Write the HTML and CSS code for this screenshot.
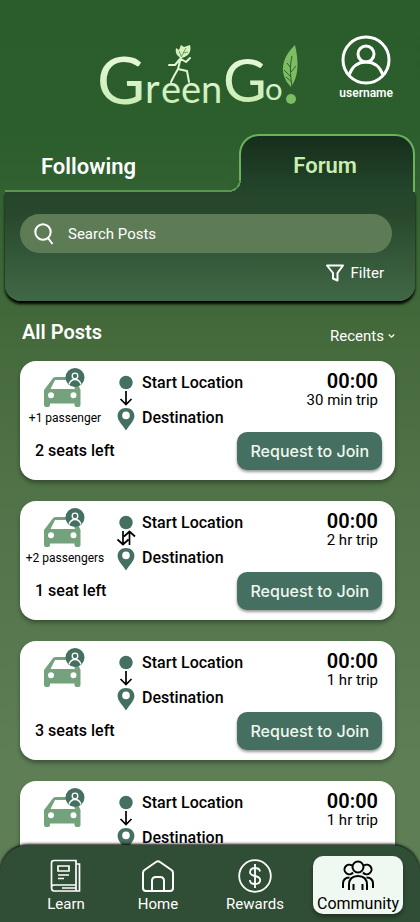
FILE: index.html
```html
<!DOCTYPE html>
<html lang="en">
<head>
<meta charset="utf-8">
<meta name="viewport" content="width=device-width, initial-scale=1">
<title>GreenGo! Community</title>
<link rel="stylesheet" href="styles.css">
</head>
<body>
<svg class="defs" width="0" height="0" aria-hidden="true">
  <defs>
    <symbol id="car" viewBox="0 0 44 42">
      <path fill="#74a27c" fill-rule="evenodd" d="M9 11.5Q9.800 9 12.500 9H29Q32 9 33 11.500L37.500 22V37Q37.500 39 35.500 39H33.500Q31.500 39 31.500 37V35.500H7V37Q7 39 5 39H3Q1 39 1 37V22ZM12 12L7.500 21H32L29 12ZM8 24.300a3 3 0 1 0 0 6a3 3 0 1 0 0-6ZM30.500 24.300a3 3 0 1 0 0 6a3 3 0 1 0 0-6Z"/>
      <circle cx="32" cy="9.500" r="9.500" fill="#446f61"/>
      <g fill="none" stroke="#fff" stroke-width="1.300"><circle cx="32" cy="8" r="2.800"/><path d="M26 16.500Q27.500 11.500 32 11.500T38 16.500"/></g>
    </symbol>
    <symbol id="oneway" viewBox="0 0 20 56">
      <circle cx="10" cy="7.500" r="6.700" fill="#446f61"/>
      <path fill="none" stroke="#000" stroke-width="1.700" d="M10 16V29M4.500 24L10 29.500L15.500 24"/>
      <path fill="#446f61" fill-rule="evenodd" d="M10 33C5 33 1.600 36.500 1.600 41C1.600 46 6.500 50 10 55.500C13.500 50 18.400 46 18.400 41C18.400 36.500 15 33 10 33ZM10 36.600a3.800 3.800 0 1 0 0 7.600a3.800 3.800 0 1 0 0-7.600Z"/>
    </symbol>
    <symbol id="roundtrip" viewBox="0 0 20 56">
      <circle cx="10" cy="7.500" r="6.700" fill="#446f61"/>
      <path fill="none" stroke="#000" stroke-width="1.700" d="M7 16V29.500M1.500 24.500L7 29.500L12.500 24.500M13.500 30V16.500M8 21.500L13.500 16.500L19 21.500"/>
      <path fill="#446f61" fill-rule="evenodd" d="M10 33C5 33 1.600 36.500 1.600 41C1.600 46 6.500 50 10 55.500C13.500 50 18.400 46 18.400 41C18.400 36.500 15 33 10 33ZM10 36.600a3.800 3.800 0 1 0 0 7.600a3.800 3.800 0 1 0 0-7.600Z"/>
    </symbol>
  </defs>
</svg>
<div class="app">
  <header class="header">
    <svg class="logo" viewBox="0 0 204 84" role="img" aria-label="GreenGo!">
      <defs><linearGradient id="mint" x1="0" y1="0" x2="0" y2="1"><stop offset="0" stop-color="#eefbe6"/><stop offset="1" stop-color="#c3eaa9"/></linearGradient></defs>
      <g class="logo-text" fill="url(#mint)">
        <text x="0" y="64" font-size="66">G</text>
        <text x="48" y="63" font-size="40">r</text>
        <text x="64" y="63" font-size="38">e</text>
        <text x="84" y="63" font-size="38">e</text>
        <text x="104" y="63" font-size="38">n</text>
        <text x="126" y="62" font-size="60">G</text>
        <text x="168" y="60" font-size="31">o</text>
      </g>
      <g fill="none" stroke="#e2f5d2" stroke-width="2" stroke-linecap="round" stroke-linejoin="round">
        <path d="M84 17L81 29L77 36L74 42M81 29L90 31L92 42M83 19L78 25L72 25M84 19L89 22L93 18"/>
      </g>
      <path fill="#d5f2bd" d="M84 18C80 16 78 13 79 8L82 10L84 5L87 7L93 5C95 12 91 17 84 18Z"/>
      <path fill="none" stroke="#50864a" stroke-width=".8" d="M84 17L89 8M84 16L82 11M86 13L91 12"/>
      <path fill="#7cbd62" d="M198 5C186 16 180 33 194 47C200 38 203 27 198 5Z"/>
      <path fill="none" stroke="#2d602e" stroke-width="1" d="M195 48C194 37 192 29 195 16M194 37L187 30M194 32L199 26M193 27L190 23M195 42L189 37"/>
      <circle cx="194" cy="59" r="5" fill="#7cbd62"/>
    </svg>
    <a class="profile" href="#profile">
      <svg width="50" height="50" viewBox="0 0 50 50" fill="none" stroke="#fff" stroke-width="3" aria-hidden="true"><circle cx="25" cy="25" r="23"/><circle cx="25" cy="19" r="8"/><path d="M8 40C11 32 17 27 25 27S39 32 42 40"/></svg>
      <span>username</span>
    </a>
  </header>

  <nav class="tabs" aria-label="Feeds">
    <a class="tab" href="#following">Following</a>
    <a class="tab tab-active" href="#forum" aria-current="page">Forum</a>
  </nav>
  <form class="panel">
    <label class="search">
      <svg width="20" height="22" viewBox="0 0 20 22" fill="none" stroke="#fff" stroke-width="2" aria-hidden="true"><circle cx="9" cy="9" r="7.700"/><path d="M14 15L18.500 21"/></svg>
      <input type="search" placeholder="Search Posts" aria-label="Search Posts">
    </label>
    <button class="filter" type="button">
      <svg width="18" height="18" viewBox="0 0 18 18" fill="none" stroke="#fff" stroke-width="2" stroke-linejoin="round" aria-hidden="true"><path d="M1 1.500H17L11.500 9V16.500L7 14.500V9Z"/></svg>
      Filter
    </button>
  </form>

  <main class="posts">
    <div class="posts-head">
      <h1>All Posts</h1>
      <label class="sort">
        <select aria-label="Sort posts"><option>Recents</option><option>Oldest</option></select>
        <svg width="7" height="6" viewBox="0 0 7 6" fill="none" stroke="#fff" stroke-width="1.300" aria-hidden="true"><path d="M.8 1.500L3.500 4.200L6.200 1.500"/></svg>
      </label>
    </div>

    <article class="card">
      <div class="trip">
        <div class="car"><svg width="44" height="42" aria-hidden="true"><use href="#car"/></svg><span>+1 passenger</span></div>
        <svg class="route-icon" width="20" height="56" aria-hidden="true"><use href="#oneway"/></svg>
        <div class="route"><span>Start Location</span><span>Destination</span></div>
        <div class="time"><strong>00:00</strong><span>30 min trip</span></div>
      </div>
      <div class="join"><span>2 seats left</span><button type="button">Request to Join</button></div>
    </article>

    <article class="card">
      <div class="trip">
        <div class="car"><svg width="44" height="42" aria-hidden="true"><use href="#car"/></svg><span>+2 passengers</span></div>
        <svg class="route-icon" width="20" height="56" aria-hidden="true"><use href="#roundtrip"/></svg>
        <div class="route"><span>Start Location</span><span>Destination</span></div>
        <div class="time"><strong>00:00</strong><span>2 hr trip</span></div>
      </div>
      <div class="join"><span>1 seat left</span><button type="button">Request to Join</button></div>
    </article>

    <article class="card">
      <div class="trip">
        <div class="car"><svg width="44" height="42" aria-hidden="true"><use href="#car"/></svg></div>
        <svg class="route-icon" width="20" height="56" aria-hidden="true"><use href="#oneway"/></svg>
        <div class="route"><span>Start Location</span><span>Destination</span></div>
        <div class="time"><strong>00:00</strong><span>1 hr trip</span></div>
      </div>
      <div class="join"><span>3 seats left</span><button type="button">Request to Join</button></div>
    </article>

    <article class="card">
      <div class="trip">
        <div class="car"><svg width="44" height="42" aria-hidden="true"><use href="#car"/></svg></div>
        <svg class="route-icon" width="20" height="56" aria-hidden="true"><use href="#oneway"/></svg>
        <div class="route"><span>Start Location</span><span>Destination</span></div>
        <div class="time"><strong>00:00</strong><span>1 hr trip</span></div>
      </div>
    </article>
  </main>

  <nav class="bottom" aria-label="Main">
    <a href="#learn">
      <svg width="34" height="34" viewBox="0 0 34 34" fill="none" stroke="#fff" stroke-width="1.700" aria-hidden="true"><path d="M5 1.500H27V26H5Q2.500 26 2.500 28.500Q2.500 32 5 32H30.500V5H27M2.500 29V4Q2.500 1.500 5 1.500M27 26V32M13 29H27M9 7H20V12H9ZM9 16H20M9 19.500H15"/></svg>
      <span>Learn</span>
    </a>
    <a href="#home">
      <svg width="34" height="34" viewBox="0 0 34 34" fill="none" stroke="#fff" stroke-width="2" stroke-linejoin="round" aria-hidden="true"><path d="M2 14Q2 12 3.500 11L15 3Q17 1.500 19 3L30.500 11Q32 12 32 14V29Q32 32 29 32H5Q2 32 2 29ZM11 32V22Q11 18 15 18H19Q23 18 23 22V32"/></svg>
      <span>Home</span>
    </a>
    <a href="#rewards">
      <svg width="34" height="34" viewBox="0 0 34 34" fill="none" stroke="#fff" stroke-width="1.800" aria-hidden="true"><circle cx="17" cy="17" r="15.800"/><path d="M17 5V29M22 12.500Q21.500 9 17 9T12 13Q12 16 17 17T22.200 21Q22.200 25 17 25T11.800 21"/></svg>
      <span>Rewards</span>
    </a>
    <a class="current" href="#community" aria-current="page">
      <svg width="34" height="34" viewBox="0 0 34 34" fill="none" stroke="#000" stroke-width="2" aria-hidden="true"><circle cx="17" cy="8" r="5.500"/><path d="M11 6.500A4.800 4.800 0 1 0 12 13.500M23 6.500A4.800 4.800 0 1 1 22 13.500M8 31V26Q8 17 17 17T26 26V31M2 29V25Q2 18.500 8.500 18.500M32 29V25Q32 18.500 25.500 18.500M12.500 31V25M21.500 31V25"/></svg>
      <span>Community</span>
    </a>
  </nav>
</div>
</body>
</html>
```
FILE: styles.css
```css
* { box-sizing: border-box; }
body {
  margin: 0;
  font-family: Roboto, "Noto Sans", sans-serif;
  font-size: 15px;
  line-height: 18px;
  color: #000;
}
a { color: inherit; text-decoration: none; }
button, input, select { font: inherit; color: inherit; border: 0; background: none; padding: 0; margin: 0; }
svg { display: block; flex: none; }
.defs { position: absolute; }

.app {
  display: flex;
  flex-direction: column;
  height: 100vh;
  background: linear-gradient(#2a5c2c 0%, #2b5d2d 14%, #456a3c 37%, #52744a 56%, #5e7e56 82%);
}

.header {
  display: grid;
  grid-template-columns: 1fr 204px 1fr;
  align-items: start;
  padding: 35px 12px 0;
  height: 134px;
  color: #fff;
}
.logo { grid-column: 2; width: 204px; margin-top: 5px; margin-left: -11px; overflow: visible; }
.logo-text { font-family: Lato, sans-serif; }
.profile {
  justify-self: end;
  display: flex;
  flex-direction: column;
  align-items: center;
  padding-right: 15px;
  font-size: 12px;
  line-height: 16px;
  font-weight: 600;
}

.tabs {
  display: grid;
  grid-template-columns: 4fr 3fr;
  align-items: end;
  margin: 0 5px;
  font-size: 22px;
  font-weight: 600;
  color: #fff;
}
.tab {
  height: 38px;
  padding-left: 36px;
  line-height: 25px;
  border-bottom: 2px solid #55994f;
}
.tab-active {
  position: relative;
  height: 58px;
  padding: 17px 4px 0 0;
  text-align: center;
  color: #c9efae;
  background: linear-gradient(#162e1c, #24462b);
  border: 2px solid #6bb25f;
  border-bottom: 0;
  border-radius: 20px 20px 0 0;
}
.tab-active::before {
  content: "";
  position: absolute;
  left: -12px;
  bottom: 0;
  width: 12px;
  height: 12px;
  background: radial-gradient(circle at 0 0, #306030 10px, #55994f 10px, #55994f 12px, #24462b 12px);
}

.panel {
  display: flex;
  flex-direction: column;
  gap: 10px;
  margin: 0 5px;
  padding: 22px 23px 18px 15px;
  border-radius: 0 0 16px 16px;
  background: linear-gradient(#24462b, #28482c 20%, #406846);
  box-shadow: 0 3px 3px #000;
  color: #fff;
}
.search {
  display: flex;
  align-items: center;
  gap: 14px;
  height: 39px;
  padding: 0 14px;
  border-radius: 20px;
  background: #5d7c56;
}
.search input { flex: 1; min-width: 0; outline: 0; appearance: none; }
.search input::placeholder { color: #fff; opacity: 1; }
.filter { display: flex; align-items: center; gap: 6px; align-self: flex-end; padding-right: 8px; line-height: 20px; }

.posts {
  flex: 1;
  min-height: 0;
  overflow: hidden auto;
  scrollbar-width: none;
  display: flex;
  flex-direction: column;
  gap: 21px;
  margin-top: 6px;
  margin-bottom: -28px;
  padding: 16px 25px 48px 20px;
}
.posts-head {
  display: flex;
  justify-content: space-between;
  align-items: center;
  height: 17px;
  padding-left: 2px;
  color: #fff;
}
.posts-head h1 { margin: 0; font-size: 20px; line-height: 24px; font-weight: 600; }
.sort { display: flex; align-items: center; gap: 4px; padding-top: 8px; }
.sort select { appearance: none; text-align: right; }

.card {
  flex: none;
  min-height: 119px;
  padding: 7px 13px 10px 2px;
  border-radius: 16px;
  background: #fff;
  box-shadow: 0 3px 4px #0005;
}
.trip { display: flex; height: 64px; }
.car {
  flex: none;
  width: 86px;
  display: flex;
  flex-direction: column;
  align-items: center;
  font-size: 12px;
  line-height: 16px;
  white-space: nowrap;
}
.route-icon { margin: 7px 6px 0 8px; }
.route { display: flex; flex-direction: column; gap: 17px; padding-top: 6px; font-size: 16px; font-weight: 500; white-space: nowrap; }
.time { margin-left: auto; padding: 3px 4px 0 0; display: flex; flex-direction: column; text-align: right; }
.time strong { font-size: 20px; line-height: 20px; font-weight: 600; }
.join { display: flex; justify-content: space-between; align-items: center; padding-left: 13px; font-size: 16px; font-weight: 500; }
.join button {
  height: 38px;
  padding: 0 13px;
  border-radius: 10px;
  background: #446f61;
  box-shadow: 0 2px 3px #0006;
  color: #f0f7ee;
  font-family: Inter, sans-serif;
  font-size: 16px;
  font-weight: 500;
}

.bottom {
  position: relative;
  flex: none;
  display: grid;
  grid-template-columns: 92fr 92fr 102fr 97fr;
  padding: 11px 17px 8px 20px;
  border-radius: 28px 28px 0 0;
  background: #304d35;
  box-shadow: 0 -1px 3px #000;
  color: #fff;
}
.bottom a {
  display: flex;
  flex-direction: column;
  align-items: center;
  gap: 2px;
  height: 58px;
  padding-top: 3px;
  border-radius: 10px;
}
.bottom .current { margin-left: 7px; font-size: 16px; background: #eff9f1; color: #000; box-shadow: 0 3px 4px #0005; }
```
